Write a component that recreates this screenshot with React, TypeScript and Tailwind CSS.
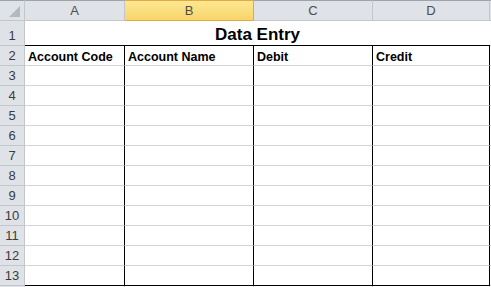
import React from 'react'

/* ── Sheet layout ──────────────────────────────────────────────────────────── */

const columns = ['A', 'B', 'C', 'D'] as const
const headings = ['Account Code', 'Account Name', 'Debit', 'Credit']
const bodyRows = [3, 4, 5, 6, 7, 8, 9, 10, 11, 12, 13]

const font = { fontFamily: '"Liberation Sans", Arial, sans-serif' }

function Corner() {
  return (
    <div className="h-[21px] bg-[#dfe3e8] border-t border-t-[#9ea3a9] border-r border-b border-r-[#c3c7cc] border-b-[#c3c7cc] flex items-end justify-end pr-[4px] pb-[3px]">
      <svg width="11" height="11" viewBox="0 0 11 11">
        <polygon points="11,0 11,11 0,11" fill="#b4b9bf" />
      </svg>
    </div>
  )
}

function ColHeader({ label, selected }: { label: string; selected?: boolean }) {
  return (
    <div
      className={`h-[21px] border-t flex items-center justify-center text-[13px] ${
        selected
          ? 'bg-gradient-to-b from-[#fde891] to-[#f8d46a] border-t-[#e1a843] border-r border-b border-r-[#e2a945] border-b-[#e2a945] text-[#4d4d4d]'
          : 'bg-[#dfe3e8] border-t-[#9ea3a9] border-r border-b border-r-[#c3c7cc] border-b-[#c3c7cc] text-[#4d4d4d]'
      }`}
    >
      {label}
    </div>
  )
}

function RowHeader({ n, tall }: { n?: number; tall?: boolean }) {
  return (
    <div
      className={`${tall ? 'h-[25px]' : 'h-[20px]'} bg-[#dfe3e8] border-r border-b border-r-[#c3c7cc] border-b-[#c3c7cc] flex items-end justify-center pb-[1px] text-[13px] text-[#3b3b3b] leading-none`}
    >
      <span className="pb-[2px]">{n}</span>
    </div>
  )
}

/* ── Component ─────────────────────────────────────────────────────────────── */

export default function App() {
  return (
    <div className="w-[491px] h-[287px] overflow-hidden bg-white" style={font}>
      <div className="grid grid-cols-[25px_100px_129px_119px_117px_1fr]">
        {/* column headers */}
        <Corner />
        {columns.map((c) => (
          <ColHeader key={c} label={c} selected={c === 'B'} />
        ))}
        <div className="h-[21px] bg-[#dfe3e8] border-t border-t-[#9ea3a9] border-b border-b-[#c3c7cc]" />

        {/* row 1 — merged title */}
        <RowHeader n={1} tall />
        <div className="col-span-4 h-[25px] border-b border-b-black flex items-end justify-center pb-[2px] text-[17px] font-bold text-black leading-none">
          Data Entry
        </div>
        <div className="h-[25px] border-b border-b-[#d4d4d4]" />

        {/* row 2 — headings */}
        <RowHeader n={2} />
        {headings.map((h) => (
          <div
            key={h}
            className="h-[20px] border-r border-r-black border-b border-b-[#d4d4d4] flex items-end pl-[3px] pb-[2px] text-[12.5px] font-bold text-black leading-none"
          >
            {h}
          </div>
        ))}
        <div className="h-[20px] border-b border-b-[#d4d4d4]" />

        {/* rows 3-13 */}
        {bodyRows.map((n) => (
          <React.Fragment key={n}>
            <RowHeader n={n} />
            {columns.map((c) => (
              <div
                key={c}
                className={`h-[20px] border-r border-r-black border-b ${
                  n === 13 ? 'border-b-black' : 'border-b-[#d4d4d4]'
                }`}
              />
            ))}
            <div className="h-[20px] border-b border-b-[#d4d4d4]" />
          </React.Fragment>
        ))}

        {/* row 14 peeking in */}
        <RowHeader />
        {columns.map((c) => (
          <div key={c} className="h-[20px] border-r border-r-[#d4d4d4]" />
        ))}
        <div className="h-[20px]" />
      </div>
    </div>
  )
}
